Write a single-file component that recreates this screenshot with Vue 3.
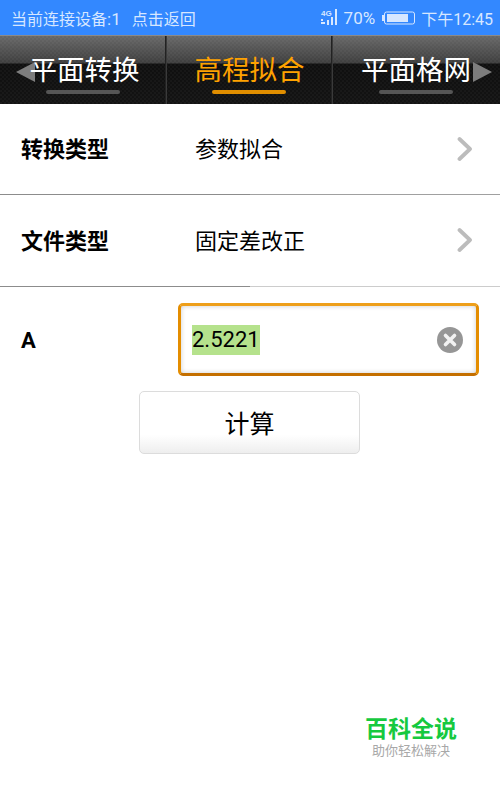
<template>
  <div class="page">
    <header class="status">
      <span class="status-left"><span>当前连接设备<b class="num">:1</b></span><span class="back">点击返回</span></span>
      <div class="status-right">
        <svg class="signal" width="17" height="18" viewBox="0 0 17 18">
          <text x="0" y="6.5" class="net">4G</text>
          <rect x="0" y="10" width="2" height="2" fill="#d7e7ff" />
          <rect x="0" y="13" width="4" height="2" fill="#d7e7ff" />
          <rect x="6" y="11" width="2" height="5" fill="#d7e7ff" />
          <rect x="10" y="8" width="2" height="8" fill="#d7e7ff" />
          <rect x="14" y="0" width="2" height="16" fill="#d7e7ff" />
        </svg>
        <span class="pct">70%</span>
        <svg width="33" height="14" viewBox="0 0 33 14">
          <rect x="0" y="4" width="2" height="6" fill="#d7e7ff" />
          <rect x="2.5" y="1" width="30" height="12" rx="2" fill="none" stroke="#d7e7ff" />
          <rect x="5" y="3" width="21" height="8" fill="#d7e7ff" />
        </svg>
        <span class="time">下午12:45</span>
      </div>
    </header>

    <nav class="tabs">
      <i class="arrow arrow-left"></i>
      <i class="arrow arrow-right"></i>
      <div v-for="tab in tabs" :key="tab.name" class="tab" :class="[tab.cls, { active: tab.active }]">
        <span class="tab-name">{{ tab.name }}</span>
        <i class="tab-line"></i>
      </div>
    </nav>

    <div v-for="row in rows" :key="row.label" class="row" :class="row.cls">
      <span class="row-label">{{ row.label }}</span>
      <span class="row-value">{{ row.value }}</span>
      <svg class="chevron" width="16" height="26" viewBox="0 0 16 26">
        <path d="M2.5 3 L13 13 L2.5 23" fill="none" stroke="#bcbcbc" stroke-width="3.8" stroke-linecap="round" stroke-linejoin="round" />
      </svg>
    </div>

    <div class="input-row">
      <span class="row-label a-label">A</span>
      <div class="input-box">
        <span class="selected">2.5221</span>
        <svg class="clear" width="26" height="26" viewBox="0 0 26 26">
          <circle cx="13" cy="13" r="13" fill="#969696" />
          <path d="M8.5 8.5 L17.5 17.5 M17.5 8.5 L8.5 17.5" stroke="#f2f2f2" stroke-width="3.6" stroke-linecap="round" />
        </svg>
      </div>
    </div>

    <button class="calc">计算</button>

    <footer class="mark">
      <span class="mark-title">百科全说</span>
      <span class="mark-sub">助你轻松解决</span>
    </footer>
  </div>
</template>

<script setup>
const tabs = [
  { name: '平面转换', cls: 'tab-first' },
  { name: '高程拟合', cls: 'tab-mid', active: true },
  { name: '平面格网' }
]
const rows = [
  { label: '转换类型', value: '参数拟合', cls: 'row-first' },
  { label: '文件类型', value: '固定差改正', cls: 'row-second' }
]
</script>

<style>
html, body { margin: 0; background: #fff; }
</style>

<style scoped>
.page {
  width: 500px;
  height: 789px;
  overflow: hidden;
  display: flex;
  flex-direction: column;
  font-family: Roboto, "Noto Sans CJK SC", sans-serif;
  color: #000;
}
.status {
  height: 35px;
  background: #3388ff;
  color: #d7e7ff;
  font-size: 16px;
  display: flex;
  align-items: center;
  justify-content: space-between;
  padding: 0 7px 0 11px;
  flex-shrink: 0;
}
.status-left { display: flex; align-items: center; }
.num { font-weight: 400; font-size: 17px; }
.back { margin-left: 11px; }
.status-right { display: flex; align-items: center; }
.signal { margin-right: 6px; }
.net { font: bold 8px "Liberation Sans", sans-serif; fill: #d7e7ff; }
.pct { margin-right: 7px; font-size: 17px; }
.time { margin-left: 6px; }

.tabs {
  position: relative;
  height: 69px;
  flex-shrink: 0;
  display: grid;
  grid-template-columns: 166px 166px 168px;
  border-top: 1px solid #8a8a8a;
  box-sizing: border-box;
  background:
    repeating-conic-gradient(rgba(255,255,255,.03) 0 25%, transparent 0 50%) 0 0 / 4px 4px,
    linear-gradient(#686868 0, #3e3e3e 27px, #0f0f0f 28px, #131313 100%);
}
.tab {
  position: relative;
  display: flex;
  flex-direction: column;
  align-items: center;
  border-right: 1px solid #222;
  box-shadow: 1px 0 0 #3a3a3a;
  color: #fff;
}
.tab:last-of-type { border-right: 0; box-shadow: none; }
.tab-name {
  font-size: 27.5px;
  line-height: 36px;
  margin-top: 17px;
  white-space: nowrap;
}
.tab-first .tab-name { margin-left: 4px; }
.tab-mid .tab-name { margin-left: 2px; }
.tab-line {
  width: 74px;
  height: 4px;
  border-radius: 2px;
  margin-top: 1px;
  background: #555;
}
.tab.active { color: #ffa200; }
.tab.active .tab-line { background: #e08e00; }
.arrow {
  position: absolute;
  top: 26px;
  width: 0;
  height: 0;
  border-top: 10px solid transparent;
  border-bottom: 10px solid transparent;
}
.arrow-left { left: 16px; border-right: 19px solid #7d7d7d; }
.arrow-right { right: 8px; border-left: 19px solid #7d7d7d; }

.row {
  box-sizing: border-box;
  flex-shrink: 0;
  display: flex;
  align-items: center;
  padding: 0 27px 5px 21px;
  font-size: 22px;
  background-repeat: no-repeat;
  background-position: 0 100%;
  background-size: 100% 1px;
}
.row-first {
  height: 91px;
  background-image: linear-gradient(90deg, #8c8c8c 250px, #a0a0a0 250px);
}
.row-second {
  height: 92px;
  background-image: linear-gradient(90deg, #8c8c8c 250px, #cccccc 250px);
}
.row-label { width: 174px; font-weight: 700; }
.row-value { flex: 1; }
.chevron { margin-top: 3px; }
.input-row {
  display: flex;
  align-items: center;
  padding: 16px 21px 0;
  flex-shrink: 0;
}
.a-label { width: 157px; font-size: 22px; padding-top: 2px; }
.input-box {
  width: 301px;
  height: 73px;
  box-sizing: border-box;
  border: 3px solid #e48d00;
  border-top-color: #ee9f1a;
  border-bottom-color: #c46f00;
  border-radius: 5px;
  box-shadow: inset 0 0 5px rgba(0, 0, 0, .2);
  display: flex;
  align-items: center;
  justify-content: space-between;
  padding: 0 13px 0 11px;
  background: #fff;
}
.selected {
  background: #b5e28c;
  font-size: 22px;
  line-height: 30px;
}
.calc {
  align-self: flex-start;
  margin: 15px 0 0 139px;
  width: 221px;
  height: 63px;
  border: 1px solid #dcdcdc;
  border-radius: 5px;
  background: linear-gradient(#fff 0, #fff 70%, #eee 100%);
  font: 400 25px Roboto, "Noto Sans CJK SC", sans-serif;
  color: #000;
  padding: 0 0 2px;
}
.mark {
  margin-top: auto;
  margin-bottom: 30px;
  margin-left: 366px;
  width: 90px;
  display: flex;
  flex-direction: column;
  align-items: center;
}
.mark-title {
  font-size: 23px;
  line-height: 26px;
  font-weight: 700;
  color: #16c93f;
  white-space: nowrap;
}
.mark-sub {
  font-size: 13px;
  line-height: 16px;
  color: #a8a8a8;
  white-space: nowrap;
}
</style>
